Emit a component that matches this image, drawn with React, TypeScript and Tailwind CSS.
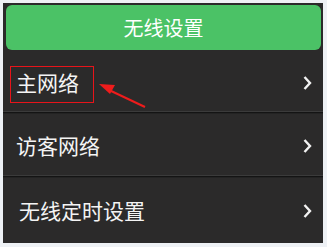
import React from "react";

const rows = [
  { label: "主网络", pt: "pt-[5px]", pl: "pl-[10px]", h: "h-[61px]" },
  { label: "访客网络", pt: "pt-[3px]", pl: "pl-[10px]", h: "h-[61px]" },
  { label: "无线定时设置", pt: "pt-[1px]", pl: "pl-[13px]", h: "h-[65px]" },
];

function Chevron() {
  return (
    <svg width="11" height="16" viewBox="0 0 11 16" className="mr-[8px]">
      <polyline
        points="2.5,2 8,8 2.5,14"
        fill="none"
        stroke="#f2f2f2"
        strokeWidth="2.4"
      />
    </svg>
  );
}

export default function App() {
  return (
    <div
      className="w-[327px] h-[247px] bg-[#eef1f5] pt-[3px] pl-[3px] pr-[4px] pb-[4px]"
      style={{ fontFamily: '"Noto Sans CJK SC", "Noto Sans", sans-serif' }}
    >
      <div className="relative h-full bg-[#2b2a2a] pt-[2px] pl-[3px] pr-[2px]">
        {/* Header button */}
        <div className="h-[45px] rounded-[6px] bg-[#4bc266] flex items-center justify-center text-white text-[20px]">
          无线设置
        </div>

        {rows.map((row, i) => (
          <div key={row.label}>
            {i > 0 && (
              <div className="-ml-[3px] -mr-[2px]">
                <div className="h-[1px] bg-[#3b3b3b]" />
                <div className="h-[1px] bg-[#141414]" />
                <div className="h-[1px] bg-[#232323]" />
              </div>
            )}
            <div
              className={`${row.h} ${row.pt} ${row.pl} flex items-center justify-between text-[21px] text-[#f4f4f4]`}
            >
              <span>{row.label}</span>
              <Chevron />
            </div>
          </div>
        ))}

        {/* annotation: red box + arrow */}
        <div className="absolute left-[7px] top-[63px] w-[84px] h-[37px] border border-[#e8141a]" />
        <svg
          className="absolute left-[94px] top-[78px]"
          width="52"
          height="32"
          viewBox="0 0 52 32"
        >
          <line x1="48" y1="26" x2="12" y2="9" stroke="#ee1c1c" strokeWidth="2" />
          <polygon points="2,3 18,4 13,13" fill="#ee1c1c" />
        </svg>
      </div>
    </div>
  );
}
